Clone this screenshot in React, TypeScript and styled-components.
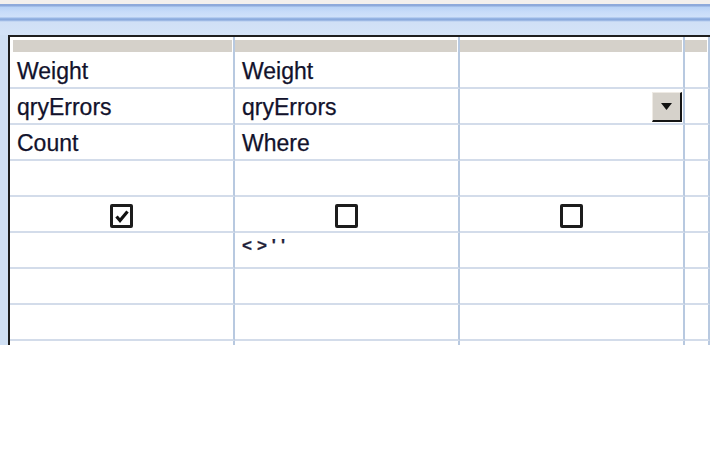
import React from "react";
import styled, { createGlobalStyle } from "styled-components";

const Global = createGlobalStyle`
  html, body { margin: 0; padding: 0; background: #ffffff; }
  body { width: 710px; height: 460px; overflow: hidden; font-family: "Liberation Sans", Arial, sans-serif; }
`;

const Page = styled.div`
  width: 710px;
  height: 460px;
  background: #ffffff;
  display: flex;
  flex-direction: column;
`;

const TopStrip = styled.div`
  height: 4px;
  background: #f3f0ed;
`;

const BlueBand = styled.div`
  height: 31px;
  background: linear-gradient(
    to bottom,
    #8eaadb 0px,
    #8eaadb 2px,
    #b9d3f6 3px,
    #c8dcf9 8px,
    #cfe1fa 13px,
    #9ab8e6 14px,
    #86a6da 16px,
    #b4cbee 17px,
    #d0e0f6 18px,
    #d4e3f7 31px
  );
`;

const Frame = styled.div`
  display: flex;
  background: #d0e0f4;
  padding-left: 8px;
  height: 310px;
`;

const Grid = styled.div`
  flex: 1;
  border-left: 2px solid #1e1e1e;
  border-top: 2px solid #1e1e1e;
  background: #ffffff;
  overflow: hidden;
  display: grid;
  grid-template-columns: 225px 225px 225px 1fr;
  grid-auto-rows: 36px;
  grid-template-rows: 16px;
  align-content: start;
`;

const HeadCell = styled.div<{ $first?: boolean }>`
  height: 16px;
  box-sizing: border-box;
  padding-top: 3px;
  padding-left: ${(p) => (p.$first ? "3px" : "0")};
  border-right: 2px solid #b8c9e0;
  background: #ffffff;
  &::after {
    content: "";
    display: block;
    height: 12px;
    background: #d5d1ca;
    margin-right: 1px;
  }
`;

const Cell = styled.div<{ $center?: boolean }>`
  box-sizing: border-box;
  height: 36px;
  border-right: 2px solid #b8c9e0;
  border-bottom: 2px solid #d3dcea;
  display: flex;
  align-items: center;
  justify-content: ${(p) => (p.$center ? "center" : "flex-start")};
  padding-left: ${(p) => (p.$center ? "0" : "7px")};
  padding-top: ${(p) => (p.$center ? "0" : "3px")};
  position: relative;
  font-family: "Liberation Sans", Arial, sans-serif;
  font-size: 23px;
  color: #12122c;
  -webkit-text-stroke: 0.25px #12122c;
  white-space: nowrap;
`;

const Criteria = styled.span`
  font-size: 17px;
  font-weight: bold;
  letter-spacing: 5px;
  color: #1f1f3a;
  margin-top: -12px;
`;

const DropButton = styled.div`
  position: absolute;
  right: 1px;
  top: 3px;
  width: 30px;
  height: 30px;
  box-sizing: border-box;
  background: #d6d2cb;
  border-top: 1px solid #eeeae4;
  border-left: 1px solid #eeeae4;
  border-right: 2px solid #141414;
  border-bottom: 2px solid #141414;
  display: flex;
  align-items: center;
  justify-content: center;
`;

const Box = styled.div`
  width: 23px;
  height: 24px;
  box-sizing: border-box;
  border: 3px solid #1c1c1c;
  border-radius: 2px;
  background: #ffffff;
  display: flex;
  align-items: center;
  justify-content: center;
  margin-top: 4px;
`;

const Below = styled.div`
  flex: 1;
  background: #ffffff;
`;

const Check: React.FC<{ checked?: boolean }> = ({ checked }) => (
  <Box>
    {checked && (
      <svg width="14" height="13" viewBox="0 0 14 13">
        <path d="M1.5 6.5 L5 10.5 L12.5 1.5" fill="none" stroke="#111" strokeWidth="3.2" strokeLinejoin="miter" />
      </svg>
    )}
  </Box>
);

type Row = [React.ReactNode, React.ReactNode, React.ReactNode, boolean?];

const rows: Row[] = [
  ["Weight", "Weight", ""],
  ["qryErrors", "qryErrors", "", true],
  ["Count", "Where", ""],
  ["", "", ""],
];

export default function App() {
  return (
    <Page>
      <Global />
      <TopStrip />
      <BlueBand />
      <Frame>
        <Grid>
          <HeadCell $first />
          <HeadCell />
          <HeadCell />
          <HeadCell />
          {rows.map((r, i) => (
            <React.Fragment key={i}>
              <Cell>{r[0]}</Cell>
              <Cell>{r[1]}</Cell>
              <Cell>
                {r[2]}
                {r[3] && (
                  <DropButton>
                    <svg width="11" height="7" viewBox="0 0 11 7">
                      <path d="M0 0 H11 L5.5 7 Z" fill="#111" />
                    </svg>
                  </DropButton>
                )}
              </Cell>
              <Cell />
            </React.Fragment>
          ))}
          <Cell $center>
            <Check checked />
          </Cell>
          <Cell $center>
            <Check />
          </Cell>
          <Cell $center>
            <Check />
          </Cell>
          <Cell />
          <Cell />
          <Cell>
            <Criteria>{"<>''"}</Criteria>
          </Cell>
          <Cell />
          <Cell />
          {Array.from({ length: 12 }).map((_, i) => (
            <Cell key={"e" + i} />
          ))}
        </Grid>
      </Frame>
      <Below />
    </Page>
  );
}
